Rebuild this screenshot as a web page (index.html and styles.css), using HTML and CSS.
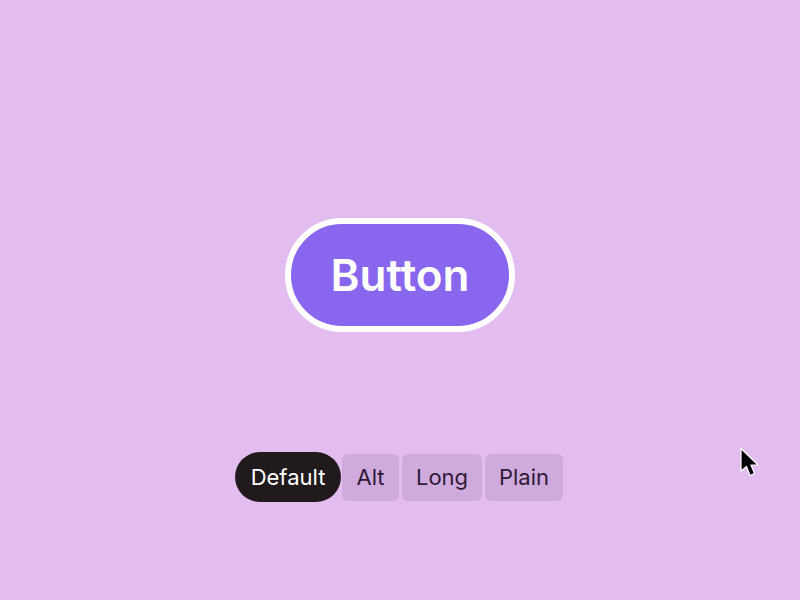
FILE: index.html
```html
<!DOCTYPE html>
<html lang="en">
<head>
    <meta charset="UTF-8">
    <title>Button</title>
    <link rel="stylesheet" href="styles.css">
</head>
<body>
    <div class="stage">
        <button class="demo-btn">Button</button>
    </div>

    <div class="chips">
        <div class="chip chip-active">Default</div>
        <div class="chip chip-alt">Alt</div>
        <div class="chip chip-long">Long</div>
        <div class="chip chip-plain">Plain</div>
    </div>

    <svg class="cursor" width="22" height="34" viewBox="0 0 22 34">
        <path d="M2 1.5 L2 24 L7.5 19.5 L11 28.5 L15.5 26.5 L12 18 L19 18 Z" fill="#000" stroke="#fff" stroke-width="1.2" stroke-linejoin="round"/>
    </svg>
</body>
</html>
```

FILE: styles.css
```css
* {
    margin: 0;
    padding: 0;
    box-sizing: border-box;
}
html, body {
    height: 100%;
}
body {
    position: relative;
    overflow: hidden;
    background-color: #e3bcf0;
    font-family: "Inter", "Liberation Sans", sans-serif;
}
/* big button */
.stage {
    display: flex;
    justify-content: center;
    padding-top: 218px;
}
.demo-btn {
    width: 230px;
    height: 114px;
    border: 6px solid #fff;
    border-radius: 57px;
    background-color: #8867ee;
    color: #fff;
    font-family: inherit;
    font-size: 44px;
    font-weight: 600;
}
/* bottom selector */
.chips {
    display: flex;
    align-items: center;
    margin-top: 120px;
    padding-left: 235px;
}
.chip {
    display: flex;
    align-items: center;
    justify-content: center;
    height: 47px;
    padding-bottom: 1px;
    border-radius: 6px;
    background-color: #cfabdd;
    color: #2f1a36;
    font-size: 22px;
}
.chip-active {
    width: 106px;
    height: 50px;
    border-radius: 25px;
    background-color: #211a1c;
    color: #fff;
}
.chip-alt {
    width: 57px;
    margin-left: 1px;
}
.chip-long {
    width: 80px;
    margin-left: 3px;
}
.chip-plain {
    width: 78px;
    margin-left: 3px;
}
.cursor {
    position: absolute;
    left: 739px;
    top: 447px;
}
```
